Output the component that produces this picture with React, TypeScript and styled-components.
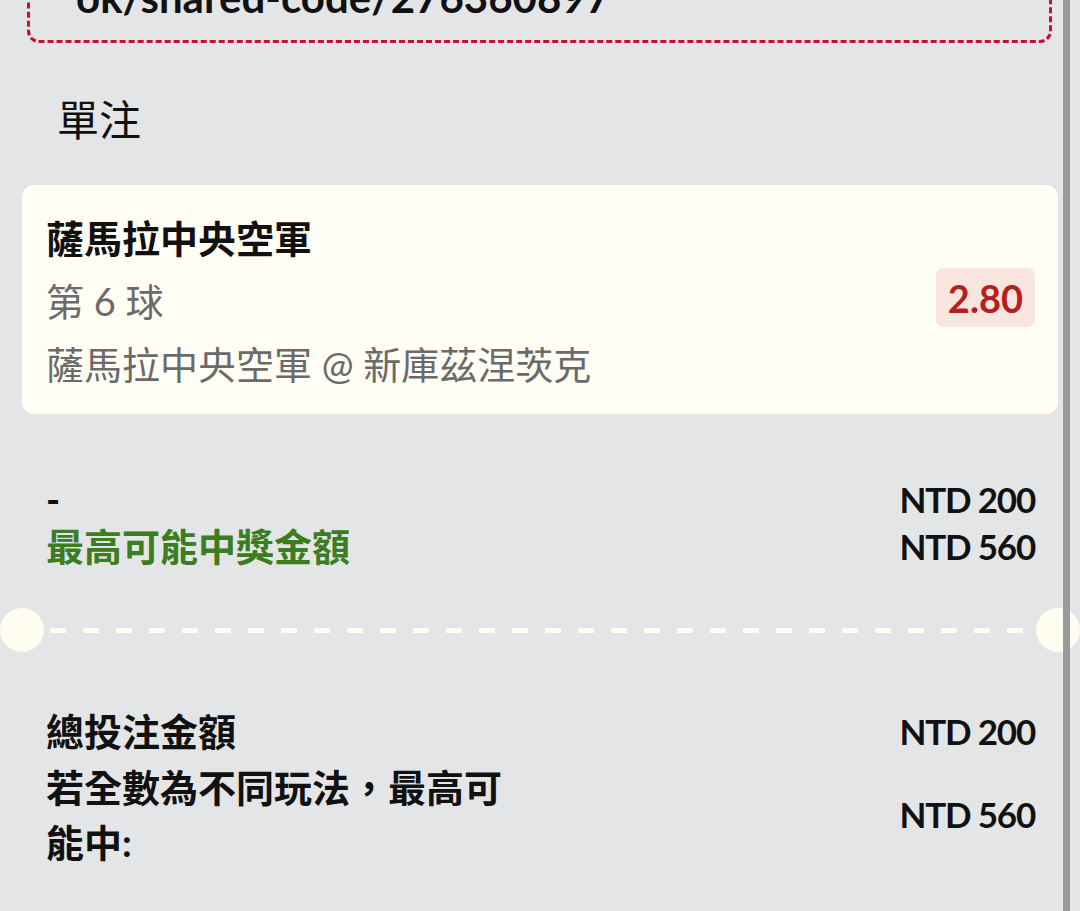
import React from "react";
import styled, { createGlobalStyle } from "styled-components";

const GlobalStyle = createGlobalStyle`
  html, body {
    margin: 0;
    padding: 0;
    background: #e4e5e7;
  }
  body {
    font-family: Lato, "Noto Sans CJK TC", sans-serif;
    color: #111;
  }
`;

const summary = [
  { label: "-", value: "NTD 200", green: false },
  { label: "最高可能中獎金額", value: "NTD 560", green: true },
];

const totals = [
  { label: "總投注金額", value: "NTD 200" },
  { label: "若全數為不同玩法，最高可能中:", value: "NTD 560" },
];

export default function App() {
  return (
    <>
      <GlobalStyle />
      <Page>
        <Content>
          <ShareBox>
            <ShareLink>ok/shared-code/276360897</ShareLink>
          </ShareBox>

          <SectionTitle>單注</SectionTitle>

          <BetCard>
            <BetInfo>
              <TeamName>薩馬拉中央空軍</TeamName>
              <SubLine>第 6 球</SubLine>
              <SubLine>薩馬拉中央空軍 @ 新庫茲涅茨克</SubLine>
            </BetInfo>
            <OddsBadge>2.80</OddsBadge>
          </BetCard>

          <SummaryGrid>
            {summary.map((row) => (
              <React.Fragment key={row.value}>
                <SummaryLabel $green={row.green}>{row.label}</SummaryLabel>
                <Amount>{row.value}</Amount>
              </React.Fragment>
            ))}
          </SummaryGrid>

          <Divider>
            <Notch $side="left" />
            <DashLine />
            <Notch $side="right" />
          </Divider>

          <TotalsList>
            {totals.map((row) => (
              <TotalRow key={row.label}>
                <TotalLabel>{row.label}</TotalLabel>
                <Amount>{row.value}</Amount>
              </TotalRow>
            ))}
          </TotalsList>
        </Content>
        <ScrollThumb />
      </Page>
    </>
  );
}

const Page = styled.div`
  position: relative;
  width: 1080px;
  height: 911px;
  overflow: hidden;
  background: #e4e5e7;
`;

const Content = styled.div`
  display: flex;
  flex-direction: column;
  padding: 0 22px;
`;

const ShareBox = styled.div`
  margin: -77px 6px 0 5px;
  height: 120px;
  box-sizing: border-box;
  border: 3px dashed #c8102e;
  border-radius: 12px;
  padding: 0 0 0 46px;
  display: flex;
  align-items: flex-start;
`;

const ShareLink = styled.div`
  font-size: 42px;
  font-weight: 700;
  line-height: 1;
  margin-top: 50px;
  color: #111;
`;

const SectionTitle = styled.div`
  margin: 47px 0 0 35px;
  font-size: 42px;
  font-weight: 400;
  line-height: 60px;
  color: #111;
`;

const BetCard = styled.div`
  margin-top: 35px;
  background: #fffdf4;
  border-radius: 12px;
  padding: 22px 23px 18px 24px;
  display: flex;
  align-items: center;
  justify-content: space-between;
`;

const BetInfo = styled.div`
  display: flex;
  flex-direction: column;
`;

const TeamName = styled.div`
  font-size: 38px;
  font-weight: 700;
  line-height: 63px;
  color: #111;
`;

const SubLine = styled.div`
  font-size: 38px;
  font-weight: 400;
  line-height: 63px;
  color: #6a6a6a;
`;

const OddsBadge = styled.div`
  margin-top: -8px;
  background: #f8e5df;
  border-radius: 8px;
  padding: 0 12px;
  height: 59px;
  display: flex;
  align-items: center;
  font-size: 38px;
  font-weight: 700;
  color: #b5201d;
`;

const SummaryGrid = styled.div`
  margin-top: 62px;
  padding: 0 23px 0 24px;
  display: grid;
  grid-template-columns: 1fr auto;
  line-height: 47px;
`;

const SummaryLabel = styled.div<{ $green: boolean }>`
  font-size: 38px;
  font-weight: 700;
  color: ${(p) => (p.$green ? "#3c7d22" : "#111")};
`;

const Amount = styled.div`
  font-size: 35px;
  font-weight: 700;
  color: #111;
  text-align: right;
  letter-spacing: -1.2px;
`;

const Divider = styled.div`
  margin: 38px -22px 0;
  height: 44px;
  display: flex;
  align-items: center;
`;

const Notch = styled.div<{ $side: "left" | "right" }>`
  flex: none;
  width: 44px;
  height: 44px;
  border-radius: 50%;
  background: #fffdf0;
  margin: ${(p) => (p.$side === "left" ? "0 6px 0 0" : "0 0 0 4px")};
`;

const DashLine = styled.div`
  flex: 1;
  height: 5px;
  background: repeating-linear-gradient(
    to right,
    #fffdf0 0,
    #fffdf0 16px,
    transparent 16px,
    transparent 33px
  );
`;

const TotalsList = styled.div`
  margin-top: 52px;
  padding: 0 23px 0 24px;
  display: flex;
  flex-direction: column;
`;

const TotalRow = styled.div`
  display: flex;
  justify-content: space-between;
  align-items: center;
  line-height: 55.5px;
`;

const TotalLabel = styled.div`
  width: 470px;
  font-size: 38px;
  font-weight: 700;
  color: #111;
`;

const ScrollThumb = styled.div`
  position: absolute;
  top: 0;
  bottom: 0;
  right: 10px;
  width: 7px;
  background: #9a9a9a;
`;
